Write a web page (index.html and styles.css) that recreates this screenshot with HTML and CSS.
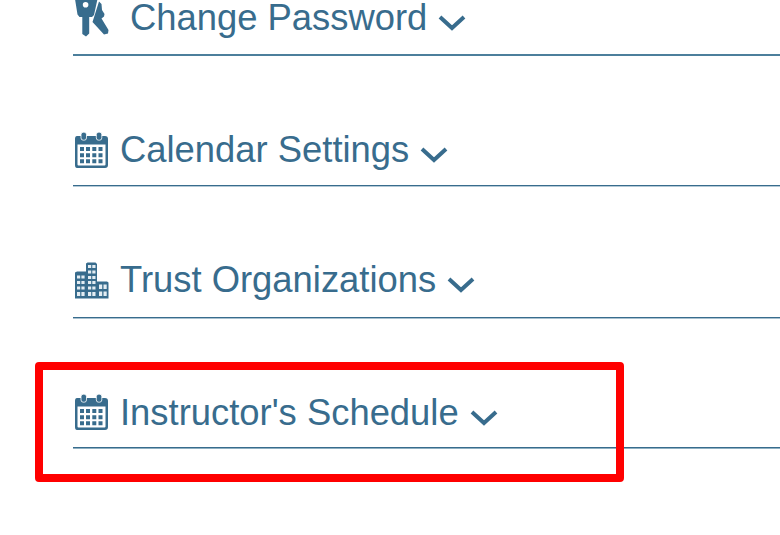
FILE: index.html
```
<!DOCTYPE html>
<html lang="en">
<head>
	<meta charset="UTF-8">
	<title>Settings</title>
	<link rel="stylesheet" href="styles.css">
</head>
<body>
	<!-- shared icons -->
	<svg class="defs" width="0" height="0">
		<symbol id="calendar" viewBox="0 0 36 38">
			<path fill-rule="evenodd" d="M4 5H32Q35 5 35 8V34Q35 37 32 37H4Q2 37 2 34V8Q2 5 4 5ZM4.500 13.500V33.500Q4.500 34.500 5.500 34.500H31.500Q32.500 34.500 32.500 33.500V13.500Z"/>
			<path d="M7 16h4v4H7zM13 16h4v4h-4zM19.300 16h4v4h-4zM25.500 16h4v4h-4zM7 22.300h4v4H7zM13 22.300h4v4h-4zM19.300 22.300h4v4h-4zM25.500 22.300h4v4h-4zM7 28.300h4v4H7zM13 28.300h4v4h-4zM19.300 28.300h4v4h-4zM25.500 28.300h4v4h-4z"/>
			<rect class="ring" x="8" y="1.200" width="5.500" height="8" rx="2.300"/>
			<rect class="ring" x="23.300" y="1.200" width="5.500" height="8" rx="2.300"/>
		</symbol>
		<symbol id="building" viewBox="0 0 36 38">
			<path d="M2 11.500L4 10.500H13V2.500L14.500 1.500H22.500L24 3V20.500H34L35.500 21.500V37.500H2Z"/>
			<path class="pane" d="M15 4h3.200v3h-3.200zM19.300 4h3.200v3h-3.200zM15 9.500h3.200v3h-3.200zM19.300 9.500h3.200v3h-3.200zM15 15h3.200v3h-3.200zM19.300 15h3.200v3h-3.200zM15 20h3.200v3h-3.200zM19.300 20h3.200v3h-3.200zM15 25.500h3.200v3h-3.200zM19.300 25.500h3.200v3h-3.200zM15 31h3.200v4h-3.200zM19.300 31h3.200v4h-3.200z"/>
			<path class="pane" d="M4 14.500h3.200v3h-3.200zM8.400 14.500h3.200v3h-3.200zM4 20h3.200v3h-3.200zM8.400 20h3.200v3h-3.200zM4 25.500h3.200v3h-3.200zM8.400 25.500h3.200v3h-3.200zM4 31h3.200v4h-3.200zM8.400 31h3.200v4h-3.200zM26 23.500h3.200v4.500h-3.200zM30.500 23.500h3.200v4.500h-3.200zM26 30.500h3.200v4.500h-3.200zM30.500 30.500h3.200v4.500h-3.200z"/>
		</symbol>
		<symbol id="keys" viewBox="0 0 36 38">
			<path fill-rule="evenodd" d="M2 0H24.500L21 16L19 18H16.200V34.500L13 37.500L9.300 35V18H6.500L4.500 15.500ZM12.600 3A2.800 2.800 0 1 0 12.600 8.600A2.800 2.800 0 1 0 12.600 3Z"/>
			<path d="M26 2.500L28.500 5L29 11L31.500 15L31 17.500L28.500 19.500L35.500 31L35 34.500L31 35.500L19.500 23Z"/>
		</symbol>
		<symbol id="chevron" viewBox="0 0 28 18">
			<path class="stroke" d="M2 3L14 14L26 3"/>
		</symbol>
	</svg>

	<div class="settings">
		<div class="item item-password">
			<svg class="icon"><use href="#keys"/></svg>
			<span class="title">Change Password</span>
			<svg class="arrow"><use href="#chevron"/></svg>
		</div>
		<div class="item item-calendar">
			<svg class="icon"><use href="#calendar"/></svg>
			<span class="title">Calendar Settings</span>
			<svg class="arrow"><use href="#chevron"/></svg>
		</div>
		<div class="item item-trust">
			<svg class="icon"><use href="#building"/></svg>
			<span class="title">Trust Organizations</span>
			<svg class="arrow"><use href="#chevron"/></svg>
		</div>
		<div class="item item-schedule">
			<svg class="icon"><use href="#calendar"/></svg>
			<span class="title">Instructor's Schedule</span>
			<svg class="arrow"><use href="#chevron"/></svg>
		</div>
	</div>
	<div class="highlight"></div>
</body>
</html>
```

FILE: styles.css
```
*{
	margin: 0;
	padding: 0;
	box-sizing: border-box;
}
body{
	position: relative;
	height: 535px;
	overflow: hidden;
	background: #fff;
	color: #386c8d;
	font-family: "Liberation Sans", Arial, sans-serif;
}
.defs{
	position: absolute;
}
.settings{
	padding-left: 73px;
}
.item{
	display: flex;
	align-items: flex-end;
	border-bottom: 1px solid #386c8d;
}
.item-password{
	height: 56px;
	padding-bottom: 17px;
	border-bottom: 2px solid #4c7f9c;
}
.item-calendar{
	height: 130px;
	padding-bottom: 16px;
	box-shadow: 0 1px #b4c9d6;
}
.item-trust{
	height: 132px;
	padding-bottom: 18px;
	box-shadow: 0 1px #a9c1d0;
}
.item-schedule{
	height: 130px;
	padding-bottom: 16px;
	box-shadow: 0 1px #8fb0c2;
}
.icon{
	width: 36px;
	height: 38px;
	margin-right: 11px;
	fill: #386c8d;
}
.item-password .icon{
	margin-right: 21px;
}
.ring{
	stroke: #fff;
	stroke-width: .8px;
}
.pane{
	fill: #e4edf3;
}
.title{
	margin-bottom: 1px;
	font-size: 36.4px;
	line-height: 36px;
	white-space: nowrap;
}
.item-schedule .title{
	margin-bottom: 0;
}
.arrow{
	width: 28px;
	height: 18px;
	margin: 0 0 5px 11px;
}
.item-schedule .arrow{
	margin-bottom: 4px;
}
.stroke{
	fill: none;
	stroke: #386c8d;
	stroke-width: 4px;
}
/* red frame round the schedule row */
.highlight{
	position: absolute;
	left: 35px;
	top: 362px;
	width: 589px;
	height: 120px;
	border: 8px solid #f00;
	border-radius: 4px;
}
```
